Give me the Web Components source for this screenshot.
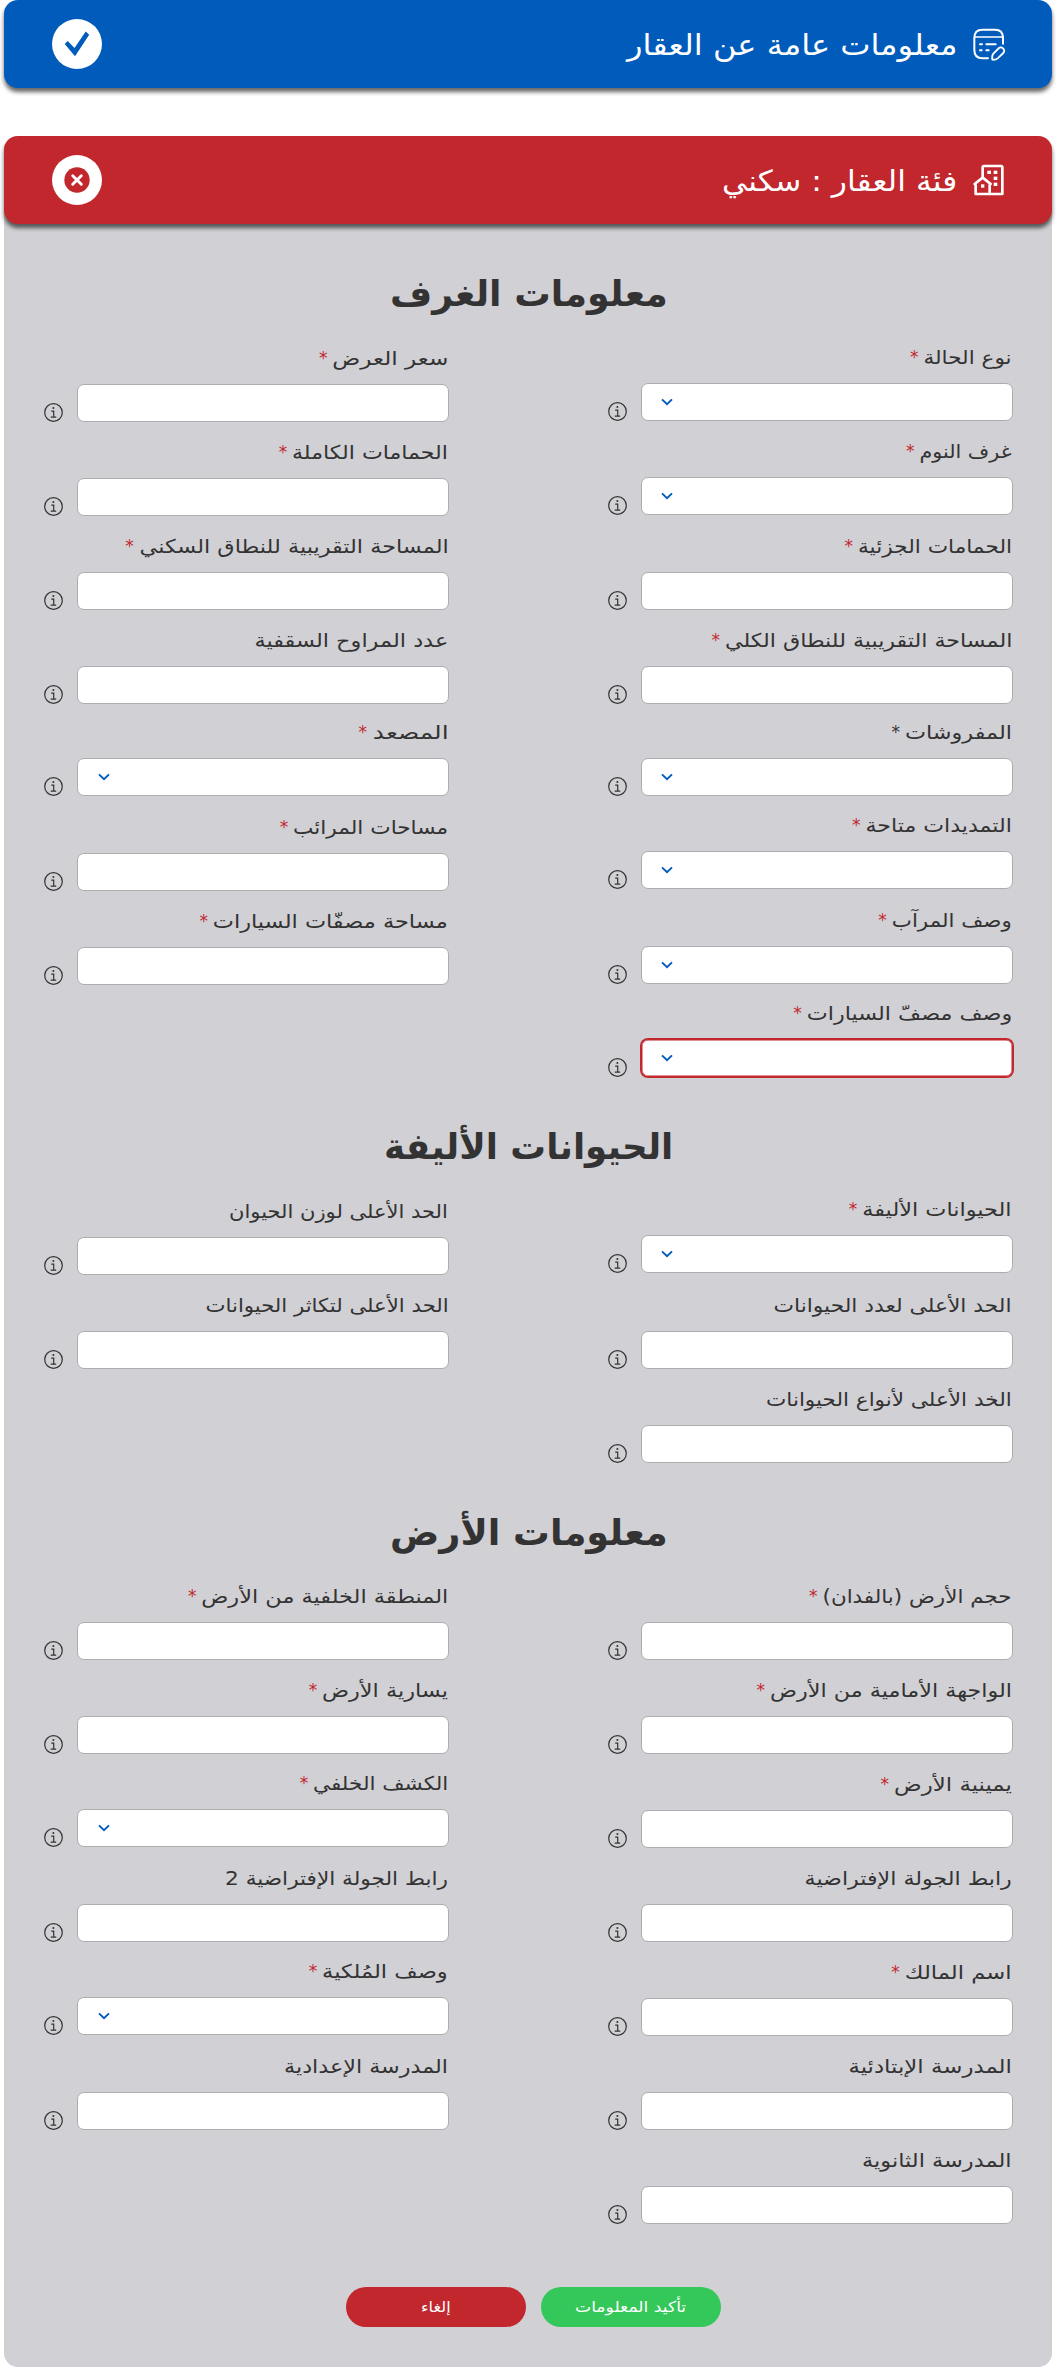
<!DOCTYPE html>
<html lang="ar" dir="rtl">
<head>
<meta charset="utf-8">
<title>معلومات العقار</title>
<style>
  body { margin: 0; background: #fff; color: #333; font-family: "DejaVu Sans", "Noto Sans", sans-serif; }
</style>
</head>
<body>
<property-page>
  <section-bar tone="blue" state="done" icon="form" w="330">معلومات عامة عن العقار</section-bar>
  <property-panel>
    <section-bar slot="bar" tone="red" state="error" icon="building" w="235">فئة العقار : سكني</section-bar>
    <field-group heading="معلومات الغرف" w="278">
      <form-field slot="start" select required w="88.6" h="95">نوع الحالة</form-field>
      <form-field slot="start" select required w="92.6" h="94">غرف النوم</form-field>
      <form-field slot="start" required w="154" h="95">الحمامات الجزئية</form-field>
      <form-field slot="start" required w="287" h="94">المساحة التقريبية للنطاق الكلي</form-field>
      <form-field slot="start" select required plain w="107" h="92">المفروشات</form-field>
      <form-field slot="start" select required w="146.5" h="93">التمديدات متاحة</form-field>
      <form-field slot="start" select required w="120.2" h="95">وصف المرآب</form-field>
      <form-field slot="start" select required invalid w="205.2" h="93">وصف مصفّ السيارات</form-field>
      <form-field slot="end" required w="115.7" h="96">سعر العرض</form-field>
      <form-field slot="end" required w="156" h="94">الحمامات الكاملة</form-field>
      <form-field slot="end" required w="309.5" h="94">المساحة التقريبية للنطاق السكني</form-field>
      <form-field slot="end" w="193.5" h="94">عدد المراوح السقفية</form-field>
      <form-field slot="end" select required w="76.3" h="92">المصعد</form-field>
      <form-field slot="end" required w="155" h="95">مساحات المرائب</form-field>
      <form-field slot="end" required w="235.3" h="94">مساحة مصفّات السيارات</form-field>
    </field-group>
    <field-group heading="الحيوانات الأليفة" w="289">
      <form-field slot="start" select required w="149.8" h="94">الحيوانات الأليفة</form-field>
      <form-field slot="start" w="238.5" h="96">الحد الأعلى لعدد الحيوانات</form-field>
      <form-field slot="start" w="246" h="94">الخد الأعلى لأنواع الحيوانات</form-field>
      <form-field slot="end" w="219" h="96">الحد الأعلى لوزن الحيوان</form-field>
      <form-field slot="end" w="243.5" h="94">الحد الأعلى لتكاثر الحيوانات</form-field>
    </field-group>
    <field-group heading="معلومات الأرض" w="278">
      <form-field slot="start" required w="189.5" h="95">حجم الأرض (بالفدان)</form-field>
      <form-field slot="start" required w="242" h="94">الواجهة الأمامية من الأرض</form-field>
      <form-field slot="start" required w="118" h="94">يمينية الأرض</form-field>
      <form-field slot="start" w="207.5" h="94">رابط الجولة الإفتراضية</form-field>
      <form-field slot="start" required w="107.3" h="94">اسم المالك</form-field>
      <form-field slot="start" w="163.6" h="94">المدرسة الإبتادئية</form-field>
      <form-field slot="start" w="150" h="94">المدرسة الثانوية</form-field>
      <form-field slot="end" required w="246.7" h="95">المنطقة الخلفية من الأرض</form-field>
      <form-field slot="end" required w="126" h="94">يسارية الأرض</form-field>
      <form-field slot="end" select required w="135" h="93">الكشف الخلفي</form-field>
      <form-field slot="end" w="223" h="95">رابط الجولة الإفتراضية 2</form-field>
      <form-field slot="end" select required w="126" h="93">وصف المُلكية</form-field>
      <form-field slot="end" w="164" h="95">المدرسة الإعدادية</form-field>
    </field-group>
    <pill-button slot="actions" tone="green" w="111">تأكيد المعلومات</pill-button>
    <pill-button slot="actions" tone="red" w="30">إلغاء</pill-button>
  </property-panel>
</property-page>

<script>
/* prepare() runs on the cloned markup before it is connected, ready() once it is laid out. */
const define = (name, markup, { prepare, ready } = {}) => {
  const template = document.createElement('template');
  template.innerHTML = markup;
  customElements.define(name, class extends HTMLElement {
    connectedCallback() {
      if (this.shadowRoot) return;
      const content = template.content.cloneNode(true);
      if (prepare) prepare(this, content);
      this.attachShadow({ mode: 'open' }).append(content);
      if (ready) ready(this, this.shadowRoot);
    }
  });
};

const passWidth = (host, content) =>
  content.querySelector('fit-text').setAttribute('w', host.getAttribute('w'));

/* One line of text condensed or expanded to a given width. */
define('fit-text', `
  <style>
    :host { display: block; flex: none; white-space: nowrap; }
    span { display: inline-block; transform-origin: 100% 50%; }
  </style>
  <span><slot></slot></span>`, {
  ready(host, root) {
    const width = parseFloat(host.getAttribute('w'));
    const span = root.querySelector('span');
    const fit = () => {
      if (span.offsetWidth) span.style.transform = `scaleX(${width / span.offsetWidth})`;
    };
    host.style.width = width + 'px';
    fit();
    new ResizeObserver(fit).observe(span);
  }
});

define('bar-icon', `
  <style>
    :host { display: block; width: 32px; height: 33px; }
    svg { display: none; width: 32px; height: 33px; }
    :host([name=form]) .form, :host([name=building]) .building { display: block; }
  </style>
  <svg class="form" viewBox="0 0 96 99" fill="none" stroke="#fff" stroke-width="6" stroke-linecap="round" stroke-linejoin="round">
    <path d="M90 47V30Q90 5 66 5H28Q4 5 4 30V66Q4 91 28 91H45"/>
    <path d="M5 27H90" stroke-width="4.5"/>
    <path d="M21 49H27M40 49H68M21 67H26M40 67H47"/>
    <path d="M58 95Q56 83 61 77L78 60Q84 56 90 61Q97 68 91 75L74 91Q68 96 58 95Z" stroke-width="5.5"/>
  </svg>
  <svg class="building" viewBox="0 0 96 99" fill="none" stroke="#fff" stroke-width="8">
    <path d="M29 41V10Q29 6 33 6H84Q88 6 88 10V90H8V61M50 61V90" stroke-linejoin="round"/>
    <path d="M5 60L29 41L53 60" stroke-linejoin="round" stroke-linecap="round"/>
    <g fill="#fff" stroke="none"><rect x="43" y="20" width="11" height="10"/><rect x="62" y="20" width="11" height="10"/><rect x="62" y="38" width="11" height="10"/><rect x="62" y="56" width="11" height="10"/><rect x="24" y="61" width="10" height="10"/></g>
  </svg>`);

define('section-bar', `
  <style>
    :host { display: flex; align-items: center; box-sizing: border-box; height: 88px; padding: 0 47px 0 48px;
      border-radius: 14px; background: #005bbb; color: #fff; box-shadow: 0 4px 4px rgba(0,0,0,.6); font-size: 29px; line-height: 50px; }
    :host([tone=red]) { background: #c1272d; }
    fit-text { margin: 1px 16px 0 0; }
    .state { margin-right: auto; width: 50px; height: 50px; }
    .done, .error { display: none; }
    :host([state=done]) .done, :host([state=error]) .error { display: block; }
  </style>
  <bar-icon></bar-icon>
  <fit-text><slot></slot></fit-text>
  <svg class="state" viewBox="0 0 50 50">
    <circle cx="25" cy="25" r="25" fill="#fff"/>
    <path class="done" d="M12.7 25.1L15.7 22L22.5 29L33.7 12.5L37.2 15.8L23 37.2Z" fill="#005bbb"/>
    <g class="error"><circle cx="25" cy="25" r="12.7" fill="#c1272d"/><path d="M20.7 20.7L29.3 29.3M29.3 20.7L20.7 29.3" stroke="#fff" stroke-width="2.9" stroke-linecap="round"/></g>
  </svg>`, {
  prepare(host, content) {
    content.querySelector('bar-icon').setAttribute('name', host.getAttribute('icon'));
    passWidth(host, content);
  }
});

define('form-field', `
  <style>
    :host { display: flex; flex-direction: column; justify-content: flex-end; width: 404.5px; }
    .label { display: flex; gap: 5px; height: 30px; line-height: 30px; font-size: 19px; margin: 0 .5px 11px 0; }
    .star { display: none; font-size: 17px; color: #c1272d; }
    :host([required]) .star { display: block; }
    :host([plain]) .star { color: #333; }
    .row { display: flex; align-items: flex-end; justify-content: space-between; height: 38px; }
    .box { box-sizing: border-box; display: flex; align-items: center; justify-content: flex-end; width: 371.5px; height: 38px; padding-left: 19.3px;
      background: #fff; border: 1px solid #aeacae; border-radius: 7px; }
    :host([invalid]) .box { border-color: #c1272d; box-shadow: 0 0 0 1px #c1272d, inset 0 0 0 .5px #c1272d; }
    .chevron { display: none; width: 12px; height: 8px; }
    :host([select]) .chevron { display: block; }
    .info { width: 19px; height: 19px; }
  </style>
  <div class="label"><fit-text><slot></slot></fit-text><span class="star">*</span></div>
  <div class="row">
    <div class="box"><svg class="chevron" viewBox="0 0 12 8" fill="none" stroke="#005bbb" stroke-width="1.9"><path d="M1 1.4L6 6.2L11 1.4"/></svg></div>
    <svg class="info" viewBox="0 0 19 19" fill="none" stroke="#333"><circle cx="9.5" cy="9.5" r="8.8" stroke-width="1.2"/><path d="M7.2 8.2H9.7V14M6.7 14.1H12.2" stroke-width="1.2"/><circle cx="9.4" cy="5" r="1" fill="#333" stroke="none"/></svg>
  </div>`, {
  prepare(host, content) {
    host.style.height = host.getAttribute('h') + 'px';
    passWidth(host, content);
  }
});

define('field-group', `
  <style>
    :host { display: block; padding-top: 46px; }
    h2 { display: flex; justify-content: center; margin: 0 0 8px; padding-left: 1px; height: 48px; line-height: 48px; font-size: 36px; font-weight: bold; }
    .columns { display: flex; align-items: flex-start; gap: 159.3px; padding-right: 39.5px; }
    .column { display: flex; flex-direction: column; width: 404.5px; }
  </style>
  <h2><fit-text></fit-text></h2>
  <div class="columns">
    <div class="column"><slot name="start"></slot></div>
    <div class="column"><slot name="end"></slot></div>
  </div>`, {
  prepare(host, content) {
    content.querySelector('fit-text').textContent = host.getAttribute('heading');
    passWidth(host, content);
  }
});

define('pill-button', `
  <style>
    :host { display: flex; align-items: center; justify-content: center; width: 180px; height: 40px; border-radius: 20px; color: #fff; font-size: 15px; line-height: 40px; }
    :host([tone=green]) { background: #34c759; }
    :host([tone=red]) { background: #c1272d; }
  </style>
  <fit-text><slot></slot></fit-text>`, { prepare: passWidth });

define('property-panel', `
  <style>
    :host { display: block; box-sizing: border-box; height: 2231px; border-radius: 14px; background: #d1d0d5; }
    .actions { display: flex; justify-content: center; gap: 15.2px; margin-top: 63px; padding-left: 11px; }
  </style>
  <slot name="bar"></slot>
  <slot></slot>
  <div class="actions"><slot name="actions"></slot></div>`);

define('property-page', `
  <style>
    :host { display: flex; flex-direction: column; gap: 48px; padding: 0 4px; }
  </style>
  <slot></slot>`);
</script>
</body>
</html>
